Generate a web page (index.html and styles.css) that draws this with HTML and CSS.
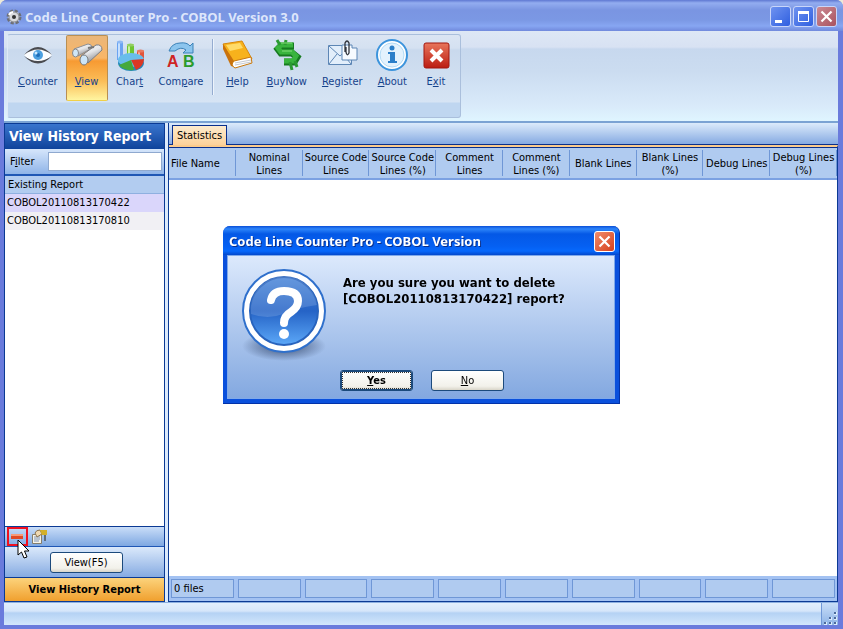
FILE: index.html
```html
<!DOCTYPE html>
<html lang="en">
<head>
    <meta charset="UTF-8">
    <meta name="viewport" content="width=device-width, initial-scale=1.0">
    <title>Code Line Counter Pro - COBOL Version 3.0</title>
    <link rel="stylesheet" href="styles.css">
</head>
<body>
    <div class="window">
        <header class="titlebar">
            <svg class="app-icon" width="16" height="16" viewBox="0 0 16 16">
                <circle cx="8" cy="8" r="6" fill="#c9cbd0" stroke="#6d7078" stroke-width="3" stroke-dasharray="3 1.7"/>
                <circle cx="8" cy="8" r="5" fill="#d9dadd" stroke="#8d9097"/>
                <circle cx="8" cy="8" r="2" fill="#333"/>
                <path d="M3 6a5 5 0 0 1 4-3" stroke="#fff" stroke-width="2" fill="none"/>
            </svg>
            <h1 class="title">Code Line Counter Pro - COBOL Version 3.0</h1>
            <button class="win-button" aria-label="Minimize">
                <svg width="19" height="19" viewBox="0 0 19 19"><path d="M4 13h7v3H4z" fill="#fff"/></svg>
            </button>
            <button class="win-button" aria-label="Maximize">
                <svg width="19" height="19" viewBox="0 0 19 19"><path d="M4.500 5.500h10v9h-10z" fill="none" stroke="#fff"/><path d="M4 4h11v3H4z" fill="#fff"/></svg>
            </button>
            <button class="win-button win-close" aria-label="Close">
                <svg width="19" height="19" viewBox="0 0 19 19"><path d="M4.500 4.500l10 10m0-10l-10 10" stroke="#fff" stroke-width="2.200"/></svg>
            </button>
        </header>

        <nav class="ribbon">
            <div class="ribbon-group">
                <div class="tools">
                    <button class="tool">
                        <svg width="32" height="32" viewBox="0 0 32 32">
                            <path d="M2 16Q16 1 30 16Q16 31 2 16z" fill="#fbfdff"/>
                            <path d="M2 17Q16 32 30 17Q16 27 2 17z" fill="#4a4b50"/>
                            <path d="M2 16Q16 0 30 16Q16 5 2 16z" fill="#4a4b50"/>
                            <circle cx="16" cy="16" r="5" fill="#4b9fe0"/>
                            <circle cx="16" cy="16" r="2" fill="#1c6db8"/>
                            <circle cx="14" cy="14" r="1.500" fill="#c9e8ff"/>
                        </svg>
                        <span><u>C</u>ounter</span>
                    </button>
                    <button class="tool active">
                        <svg width="32" height="32" viewBox="0 0 32 32">
                            <defs>
                                <linearGradient id="tube" x1="0" y1="0" x2="0.500" y2="1">
                                    <stop offset="0" stop-color="#fff"/><stop offset="0.500" stop-color="#e4e5e8"/><stop offset="1" stop-color="#8a8b90"/>
                                </linearGradient>
                            </defs>
                            <path d="M3 10L17 5Q21 5 21 9L7 17z" fill="url(#tube)" stroke="#8d8e93"/>
                            <path d="M10 17L25 6Q31 5 31 11L17 24z" fill="url(#tube)" stroke="#7c7d82"/>
                            <path d="M17 9l6-1" stroke="#777" stroke-width="2"/>
                            <ellipse cx="4.500" cy="14" rx="3" ry="4" fill="#cfe6f7" stroke="#888"/>
                            <ellipse cx="13" cy="21" rx="4" ry="5" fill="#cde5f8" stroke="#777"/>
                        </svg>
                        <span><u>V</u>iew</span>
                    </button>
                    <button class="tool">
                        <svg width="32" height="32" viewBox="0 0 32 32">
                            <path d="M3 3h6v18H3z" fill="#6aa3f2"/><path d="M4 3h2v18H4z" fill="#c6e0ff"/><ellipse cx="6" cy="3" rx="3" ry="1.500" fill="#8fbaf5"/>
                            <path d="M13 7h7v13h-7z" fill="#6dc531"/><path d="M14 7h2v13h-2z" fill="#c9f29f"/><ellipse cx="16.500" cy="6" rx="3.500" ry="1.500" fill="#92cf60"/>
                            <path d="M23 12h7v10h-7z" fill="#e2553a"/><path d="M24 12h2v10h-2z" fill="#ffab91"/><ellipse cx="26.500" cy="12" rx="3.500" ry="1.500" fill="#e97960"/>
                            <ellipse cx="17" cy="24" rx="13" ry="8" fill="#2489bb"/>
                            <ellipse cx="17" cy="21" rx="13" ry="7" fill="#69bdec"/>
                            <path d="M17 21L30 20Q30 27 22 31z" fill="#dc3824"/>
                            <path d="M17 21L20 31Q9 32 5 26z" fill="#45a93b"/>
                        </svg>
                        <span>Char<u>t</u></span>
                    </button>
                    <button class="tool">
                        <svg width="32" height="32" viewBox="0 0 32 32">
                            <path d="M4 12Q7 4 15 4Q22 3 25 7L28 4V14H18L21 11Q16 7 10 12z" fill="#8cc5ee" stroke="#3c82b8"/>
                            <text x="2" y="28" class="letter letter-a">A</text>
                            <text x="18" y="28" class="letter letter-b">B</text>
                        </svg>
                        <span>Com<u>p</u>are</span>
                    </button>
                    <span class="tool-sep"></span>
                    <button class="tool">
                        <svg width="32" height="32" viewBox="0 0 32 32">
                            <path d="M2 5L21 2L31 20L13 26z" fill="#f7b21c" stroke="#d8880c"/>
                            <path d="M2 5L2 10L10 27L13 28L13 22z" fill="#c9720c"/>
                            <path d="M13 22L30 18L31 24L14 29Q9 26 13 22z" fill="#fff" stroke="#c8780c"/>
                            <path d="M14 24L30 21M14 26L30 23" stroke="#aab0ba" stroke-width="0.700"/>
                            <path d="M5 6L19 4L22 9L9 12z" fill="#ffdb68"/>
                        </svg>
                        <span><u>H</u>elp</span>
                    </button>
                    <button class="tool">
                        <svg width="32" height="32" viewBox="0 0 32 32">
                            <path d="M23 7H10L7 10L10 14H21L26 18L23 23H13" fill="none" stroke="#167a20" stroke-width="7"/>
                            <path d="M22 6H10L7 9L10 13H21L25 17L22 22H13" fill="none" stroke="#39b43e" stroke-width="5"/>
                            <path d="M6 1l3 5m6-5l-1 5M19 23l2 8M24 22l2 6" stroke="#2a9a31" stroke-width="3"/>
                            <path d="M21 4H10M11 12h10" fill="none" stroke="#84dd7a"/>
                        </svg>
                        <span><u>B</u>uyNow</span>
                    </button>
                    <button class="tool">
                        <svg width="32" height="32" viewBox="0 0 32 32">
                            <path d="M2.500 6.500h23v19h-23z" fill="#e2eefb" stroke="#5d86b5"/>
                            <path d="M3 7l11 10L25 7M3 25l8-10M25 25l-8-10" fill="none" stroke="#5d86b5"/>
                            <path d="M16 6h10v3h5v12H16z" fill="#f6faff" stroke="#5d86b5"/>
                            <path d="M19 13V4Q21 0 23 4V14Q21 18 20 13V8" fill="none" stroke="#30343c" stroke-width="1.300"/>
                        </svg>
                        <span><u>R</u>egister</span>
                    </button>
                    <button class="tool">
                        <svg width="32" height="32" viewBox="0 0 32 32">
                            <circle cx="16" cy="16" r="15" fill="#fff" stroke="#3c94dc" stroke-width="2"/>
                            <circle cx="16" cy="16" r="12" fill="#e3f2fd" stroke="#b4dcf6"/>
                            <path d="M12 13h7v9h2v2h-9v-2h2v-7h-2z" fill="#2b7fc9"/>
                            <circle cx="16" cy="9" r="2.500" fill="#2b7fc9"/>
                        </svg>
                        <span><u>A</u>bout</span>
                    </button>
                    <button class="tool">
                        <svg width="32" height="32" viewBox="0 0 32 32">
                            <defs>
                                <linearGradient id="exit" x1="0" y1="0" x2="0" y2="1">
                                    <stop offset="0" stop-color="#e8765c"/><stop offset="1" stop-color="#bb1c12"/>
                                </linearGradient>
                            </defs>
                            <rect x="4" y="4" width="25" height="25" rx="2" fill="url(#exit)" stroke="#a3170e"/>
                            <path d="M11 11l11 11m0-11L11 22" stroke="#fff" stroke-width="4"/>
                        </svg>
                        <span>E<u>x</u>it</span>
                    </button>
                </div>
            </div>
        </nav>

        <main class="workspace">
            <aside class="sidebar">
                <h2 class="sidebar-title">View History Report</h2>
                <div class="filter">
                    <label for="filter">F<u>i</u>lter</label>
                    <input type="text" id="filter">
                </div>
                <div class="list">
                    <div class="list-head">Existing Report</div>
                    <div class="list-row selected">COBOL20110813170422</div>
                    <div class="list-row">COBOL20110813170810</div>
                </div>
                <div class="list-tools">
                    <button class="mini marked" aria-label="Delete report">
                        <svg width="17" height="14" viewBox="0 0 17 14"><path d="M2 4h12v5H2z" fill="#df4a26"/><path d="M2 4h12v2H2z" fill="#f79a78"/></svg>
                    </button>
                    <button class="mini" aria-label="Report properties">
                        <svg width="17" height="16" viewBox="0 0 17 16">
                            <path d="M1.500 5.500h9v9h-9z" fill="#f8f4e6" stroke="#857e6d"/>
                            <path d="M3 8h6M3 10h6M3 12h5" stroke="#7b91b8"/>
                            <path d="M4 4Q5 1 9 1L11 5L6 8z" fill="#f0d9b2" stroke="#8a7350"/>
                            <path d="M9 1h7v5h-5z" fill="#d3b02a"/><path d="M13 6h2v6h-2z" fill="#5e6d7c"/>
                        </svg>
                    </button>
                    <svg class="cursor" width="13" height="21" viewBox="0 0 13 21">
                        <path d="M1 1V16L4.500 13L7 19L10 18L7.500 12H12z" fill="#fff" stroke="#000"/>
                    </svg>
                </div>
                <div class="view-panel">
                    <button class="push">View(F5)</button>
                </div>
                <button class="nav-button">View History Report</button>
            </aside>

            <section class="content">
                <div class="tabs">
                    <button class="tab">Statistics</button>
                </div>
                <div class="sheet">
                    <table class="stats">
                        <thead>
                            <tr>
                                <th class="name">File Name</th>
                                <th>Nominal<br>Lines</th>
                                <th>Source Code<br>Lines</th>
                                <th>Source Code<br>Lines (%)</th>
                                <th>Comment<br>Lines</th>
                                <th>Comment<br>Lines (%)</th>
                                <th>Blank Lines</th>
                                <th>Blank Lines<br>(%)</th>
                                <th>Debug Lines</th>
                                <th>Debug Lines<br>(%)</th>
                            </tr>
                        </thead>
                        <tbody>
                            <tr><td colspan="10"></td></tr>
                        </tbody>
                        <tfoot>
                            <tr>
                                <td><div class="sum">0 files</div></td>
                                <td><div class="sum"></div></td>
                                <td><div class="sum"></div></td>
                                <td><div class="sum"></div></td>
                                <td><div class="sum"></div></td>
                                <td><div class="sum"></div></td>
                                <td><div class="sum"></div></td>
                                <td><div class="sum"></div></td>
                                <td><div class="sum"></div></td>
                                <td><div class="sum"></div></td>
                            </tr>
                        </tfoot>
                    </table>
                </div>
            </section>
        </main>

        <footer class="statusbar">
            <span class="grip">
                <svg width="14" height="14" viewBox="0 0 14 14">
                    <path d="M10 1h3v3h-3zM10 6h3v3h-3zM10 11h3v3h-3zM5 6h3v3H5zM5 11h3v3H5zM0 11h3v3H0z" fill="#dcebfc"/>
                    <path d="M10 1h2v2h-2zM10 6h2v2h-2zM10 11h2v2h-2zM5 6h2v2H5zM5 11h2v2H5zM0 11h2v2H0z" fill="#4c6a9c"/>
                </svg>
            </span>
        </footer>
    </div>

    <div class="overlay">
        <div class="dialog" role="dialog" aria-labelledby="dialogTitle">
            <div class="dialog-bar">
                <h2 class="dialog-title" id="dialogTitle">Code Line Counter Pro - COBOL Version</h2>
                <button class="win-button dialog-close" aria-label="Close">
                    <svg width="19" height="19" viewBox="0 0 19 19"><path d="M4.500 4.500l10 10m0-10l-10 10" stroke="#fff" stroke-width="2.200"/></svg>
                </button>
            </div>
            <div class="dialog-body">
                <svg class="question" width="88" height="96" viewBox="0 0 88 96">
                    <defs>
                        <linearGradient id="ball" x1="0" y1="0" x2="0" y2="1">
                            <stop offset="0" stop-color="#4a86d8"/><stop offset="0.500" stop-color="#2563c6"/><stop offset="1" stop-color="#5ca8f8"/>
                        </linearGradient>
                        <radialGradient id="shade">
                            <stop offset="0" stop-color="#2c3f63" stop-opacity="0.900"/><stop offset="1" stop-color="#2c3f63" stop-opacity="0"/>
                        </radialGradient>
                    </defs>
                    <ellipse cx="44" cy="77" rx="42" ry="15" fill="url(#shade)"/>
                    <circle cx="44" cy="42" r="41" fill="#fff" stroke="#2f70cc" stroke-width="2"/>
                    <circle cx="44" cy="42" r="34" fill="url(#ball)" stroke="#2863bd" stroke-width="2"/>
                    <path d="M11 45A33 33 0 0 1 77 36Q55 39 43 45Q28 51 11 45z" fill="#fff" opacity="0.150"/>
                    <path d="M31 31Q33 22 44 22Q58 22 58 32Q58 38 51 43Q44 47 44 54" fill="none" stroke="#fff" stroke-width="8" stroke-linecap="round"/>
                    <circle cx="44" cy="65" r="5" fill="#fff"/>
                </svg>
                <div class="dialog-main">
                    <p class="message">Are you sure you want to delete<br>[COBOL20110813170422] report?</p>
                    <div class="dialog-buttons">
                        <button class="push default"><u>Y</u>es</button>
                        <button class="push"><u>N</u>o</button>
                    </div>
                </div>
            </div>
        </div>
    </div>
</body>
</html>
```
FILE: styles.css
```css
* {
    box-sizing: border-box;
}
body {
    margin: 0;
    background: #ece9d8;
    color: #000;
    font-family: "DejaVu Sans Condensed", Tahoma, "DejaVu Sans", sans-serif;
    font-size: 11px;
    line-height: 13px;
}
h1, h2, p {
    margin: 0;
}
button, input {
    font: inherit;
    color: inherit;
    margin: 0;
    padding: 0;
}
button {
    background: none;
    border: none;
}
svg {
    display: block;
}

/* main window */
.window {
    display: flex;
    flex-direction: column;
    min-height: 100vh;
    padding: 0 5px 4px 4px;
    background: #6a7bdc;
    border-radius: 7px 7px 0 0;
    overflow: hidden;
}
.titlebar {
    display: flex;
    align-items: center;
    gap: 2px;
    height: 31px;
    margin: 0 -5px 0 -4px;
    padding: 2px 6px 0 6px;
    background: linear-gradient(#5f78d2 0, #93adf0 3px, #7a95e2 10px, #7b98e4 20px, #87a6f2 26px, #7089dc 100%);
}
.title {
    flex: 1;
    padding-left: 1px;
    font-family: "Noto Sans", sans-serif;
    font-size: 13px;
    line-height: 18px;
    color: #dde6fb;
}
.win-button {
    width: 21px;
    height: 21px;
    border: 1px solid #c9d6fa;
    border-radius: 3px;
    background: linear-gradient(135deg, #6f93f0, #2f5fe0);
}
.win-close {
    background: linear-gradient(135deg, #cb8a94, #a9525f);
}

/* ribbon */
.ribbon {
    height: 92px;
    padding: 3px;
    border-bottom: 2px solid #7ba3d3;
    background: linear-gradient(#dde7f5 0, #d8e2f3 16px, #c7d8ee 18px, #cbdcf0 40px, #d9eafa 75px, #dff5ff 100%);
}
.ribbon-group {
    display: inline-block;
    height: 84px;
    border: 1px solid #aabfdc;
    border-left-color: #dfe9f6;
    border-radius: 3px;
    background: linear-gradient(#dbe5f3 0, #d5e1f1 13px, #c9d9ed 15px, #d6e4f4 67px, #bfd6f0 68px, #bfd6f0 100%);
}
.tools {
    display: flex;
    gap: 1px;
    padding: 0 3px;
}
.tool {
    display: flex;
    flex-direction: column;
    align-items: center;
    gap: 4px;
    min-width: 42px;
    height: 66px;
    padding: 4px 7px 0 7px;
    color: #15428b;
}
.tool svg {
    flex: none;
    margin: 0 -2px;
}
.active {
    border: 1px solid #b98f52;
    border-bottom-color: #f0d048;
    border-radius: 2px;
    padding: 3px 6px 0 6px;
    background: linear-gradient(#eab679 0, #f9b667 22px, #f79a32 25px, #fbbd58 45px, #fff5a0 100%);
}
.tool-sep {
    width: 2px;
    height: 56px;
    margin: 4px 1px;
    border-left: 1px solid #95acd0;
    border-right: 1px solid #edf4fc;
}
.letter {
    font-family: "Liberation Sans", sans-serif;
    font-size: 16px;
    font-weight: bold;
}
.letter-a {
    fill: #cf2424;
}
.letter-b {
    fill: #2b9b2b;
}

/* workspace */
.workspace {
    display: flex;
    flex: 1;
    gap: 3px;
    background: #dceafb;
}
.sidebar {
    display: flex;
    flex-direction: column;
    flex: none;
    width: 161px;
    border: 1px solid #0b3a94;
}
.sidebar-title {
    height: 25px;
    padding-left: 4px;
    background: linear-gradient(#3a75cd, #0f439b);
    color: #fff;
    font-size: 14px;
    line-height: 25px;
    white-space: nowrap;
}
.filter {
    display: flex;
    align-items: center;
    gap: 14px;
    height: 27px;
    padding: 0 2px 0 5px;
    border-bottom: 2px solid #1f57b5;
    background: linear-gradient(#d6e6fb, #8fb4e8);
}
.filter input {
    flex: 1;
    min-width: 0;
    height: 19px;
    border: 1px solid #8fa9cf;
    background: #fff;
}
.list {
    flex: 1;
    background: #fff;
}
.list-head {
    height: 18px;
    padding-left: 3px;
    border-bottom: 1px solid #8fb0e0;
    background: #b2ccf0;
    line-height: 18px;
}
.list-row {
    height: 18px;
    padding-left: 2px;
    background: #f1f0f4;
    line-height: 18px;
}
.list-row.selected {
    background: #dad6fb;
}
.list-tools {
    position: relative;
    display: flex;
    align-items: center;
    gap: 1px;
    height: 21px;
    padding-left: 2px;
    border-top: 1px solid #0b3a94;
    border-bottom: 1px solid #1f57b5;
    background: linear-gradient(#c9ddf8, #7ea8e2);
}
.mini {
    display: flex;
    align-items: center;
    justify-content: center;
    width: 21px;
    height: 19px;
}
.marked {
    border: 2px solid #f01020;
}
.cursor {
    position: absolute;
    left: 12px;
    top: 12px;
}
.view-panel {
    display: flex;
    align-items: center;
    justify-content: center;
    height: 30px;
    padding-left: 3px;
    background: linear-gradient(#dbe9fb, #86abe2);
}
.push {
    width: 73px;
    height: 21px;
    border: 1px solid #1c4a7c;
    border-radius: 3px;
    background: linear-gradient(#fff, #f2f1ea 80%, #d9d5c9);
    text-align: center;
}
.nav-button {
    height: 24px;
    border-top: 1px solid #0b3a94;
    background: linear-gradient(#fcd37c, #f0a02e);
    font-weight: bold;
}

/* statistics */
.content {
    display: flex;
    flex-direction: column;
    flex: 1;
    min-width: 0;
    border-left: 1px solid #0b3a94;
}
.tabs {
    display: flex;
    align-items: flex-end;
    height: 22px;
    padding-left: 3px;
    border-bottom: 1px solid #0a2f8c;
    background: linear-gradient(#dcebfb, #86aae2);
}
.tab {
    width: 55px;
    height: 20px;
    margin-bottom: -1px;
    border: 1px solid #0a2f8c;
    border-bottom: none;
    background: linear-gradient(#fdebcd, #fcd19a);
}
.sheet {
    display: flex;
    flex: 1;
    border-top: 2px solid #fbcb8c;
    border-right: 1px solid #0b3a94;
    border-bottom: 1px solid #0b3a94;
    background: #fff;
}
.stats {
    width: 100%;
    table-layout: fixed;
    border-spacing: 0;
}
.stats th {
    height: 33px;
    padding: 1px 0 0 0;
    border-top: 1px solid #0a2f8c;
    border-bottom: 2px solid #7ba1e2;
    background: #b0cbf0 linear-gradient(#6f97d6, #6f97d6) no-repeat right center / 1px 26px;
    font-weight: normal;
    white-space: nowrap;
}
.stats .name {
    padding-left: 2px;
    text-align: left;
}
.stats td {
    padding: 0;
}
.stats tfoot td {
    height: 25px;
    padding: 0 2px;
    background: #a3c2f2;
}
.sum {
    height: 19px;
    padding-left: 2px;
    border: 1px solid #6f97d6;
    background: #b0cbf0;
    line-height: 18px;
}

/* status bar */
.statusbar {
    display: flex;
    justify-content: flex-end;
    height: 23px;
    border-top: 1px solid #8db0e0;
    background: linear-gradient(#e2effd 0, #d6e6fa 8px, #b5d2f4 10px, #d3e7fc 100%);
}
.grip {
    display: flex;
    align-items: flex-end;
    justify-content: flex-end;
    width: 17px;
    border-left: 1px solid #6f97d6;
    background: linear-gradient(#c9def8, #8db3e6);
}

/* confirm dialog */
.overlay {
    position: fixed;
    inset: 0;
    display: flex;
    align-items: center;
    justify-content: center;
}
.dialog {
    width: 397px;
    padding: 0 4px 4px 4px;
    border-radius: 7px 7px 0 0;
    background: #0a50dc;
    border-right: 1px solid #0232a8;
    border-bottom: 1px solid #0232a8;
    overflow: hidden;
}
.dialog-bar {
    display: flex;
    align-items: center;
    height: 29px;
    margin: 0 -4px;
    padding: 2px 4px 0 6px;
    background: linear-gradient(#0a4fd8 0, #2d85fa 3px, #0458e6 8px, #0560f2 20px, #0668fc 25px, #0348cc 100%);
}
.dialog-title {
    flex: 1;
    color: #fff;
    font-family: "Noto Sans", sans-serif;
    font-size: 13px;
    line-height: 18px;
    text-shadow: 1px 1px #0a2f8c;
}
.dialog-close {
    border-color: #fff;
    background: linear-gradient(135deg, #f08c6c, #d6401c);
}
.dialog-body {
    display: flex;
    gap: 15px;
    height: 144px;
    padding: 13px 16px 0 12px;
    border: 1px solid #7fa9ea;
    background: linear-gradient(#dce9fc, #83a8e0);
}
.dialog-main {
    display: flex;
    flex-direction: column;
    justify-content: space-between;
    padding: 6px 0 7px 0;
}
.message {
    font-size: 13px;
    font-weight: bold;
    line-height: 16px;
    white-space: nowrap;
}
.dialog-buttons {
    display: flex;
    gap: 18px;
    margin-left: -3px;
}
.default {
    font-weight: bold;
    outline: 1px dotted #333;
    outline-offset: -3px;
    box-shadow: inset 0 0 0 1px #1c4a7c;
}
```
